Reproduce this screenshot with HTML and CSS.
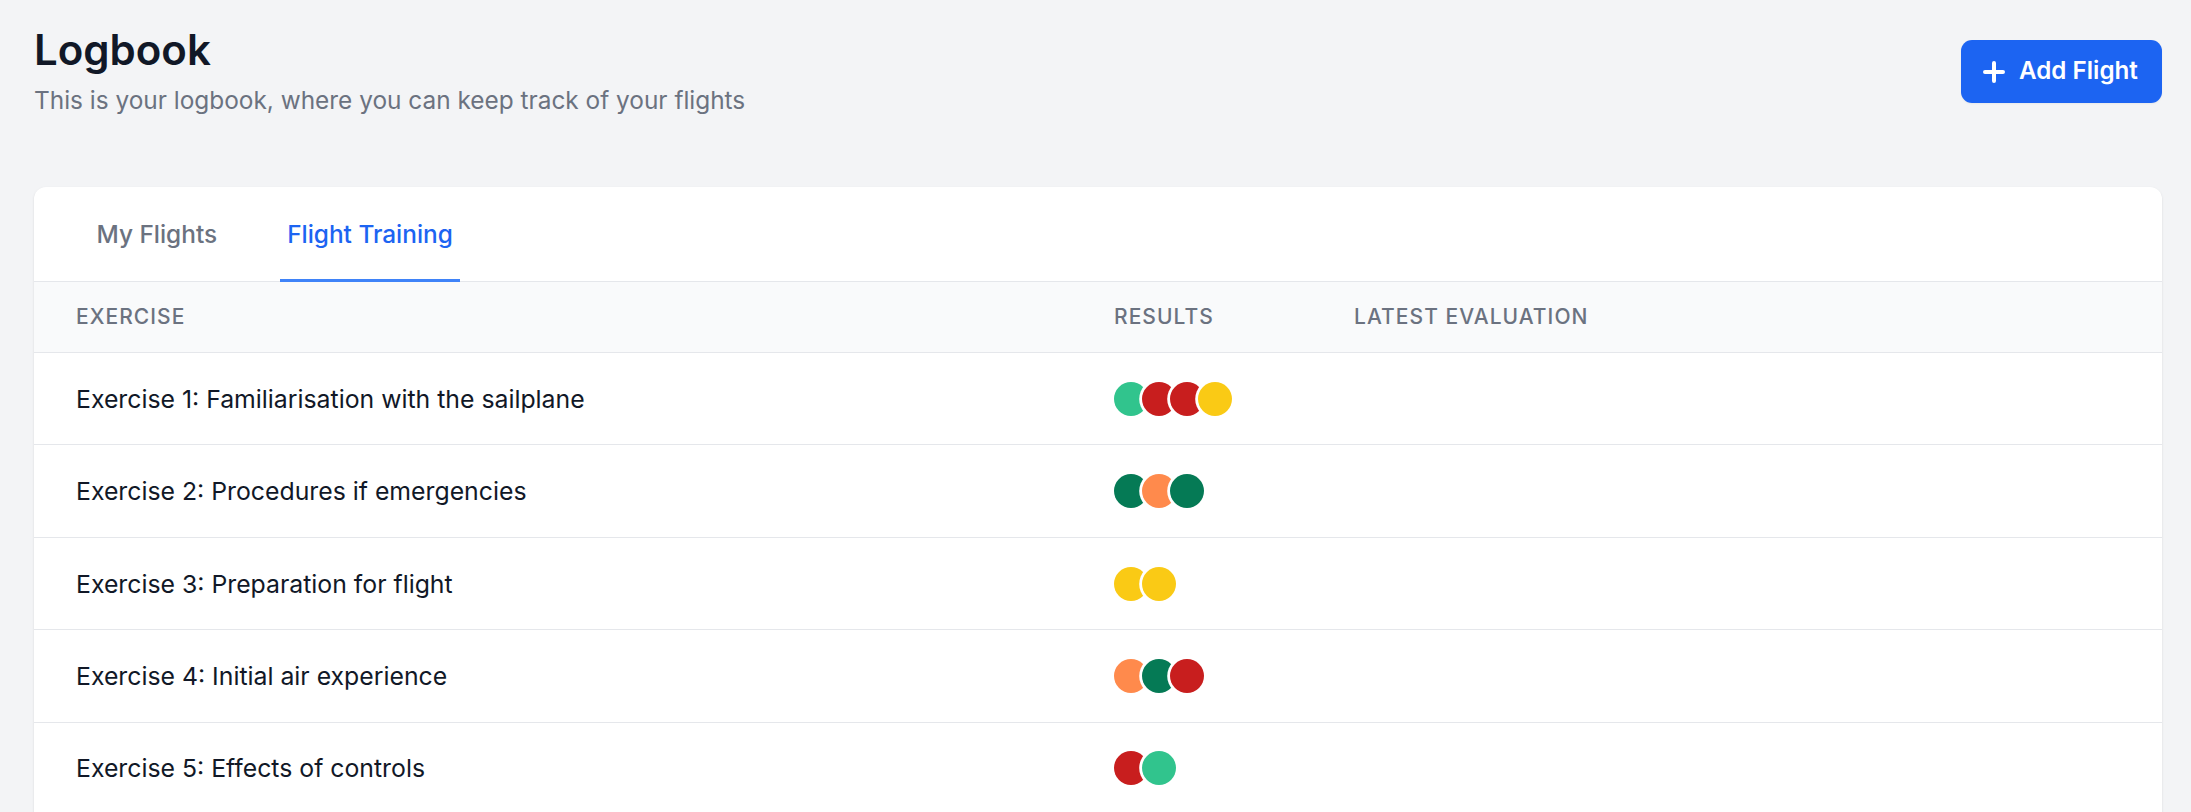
FILE: index.html
```html
<!DOCTYPE html>
<html lang="en">
<head>
<meta charset="utf-8">
<title>Logbook</title>
<link rel="stylesheet" href="styles.css">
</head>
<body>
<div class="page">
  <header class="page-header">
    <div class="heading">
      <h1 class="title">Logbook</h1>
      <p class="subtitle">This is your logbook, where you can keep track of your flights</p>
    </div>
    <button class="add-btn" type="button">
      <svg class="plus" width="22" height="22" viewBox="0 0 22 22" aria-hidden="true"><path d="M11 2v18M2 11h18" fill="none" stroke="#fff" stroke-width="4" stroke-linecap="round"/></svg>
      <span>Add Flight</span>
    </button>
  </header>

  <section class="card">
    <nav class="tabs">
      <a class="tab">My Flights</a>
      <a class="tab active">Flight Training</a>
    </nav>
    <table class="table">
      <colgroup>
        <col class="col-ex">
        <col class="col-res">
        <col class="col-eval">
      </colgroup>
      <thead>
        <tr>
          <th>Exercise</th>
          <th>Results</th>
          <th>Latest Evaluation</th>
        </tr>
      </thead>
      <tbody>
        <tr>
          <td>Exercise 1: Familiarisation with the sailplane</td>
          <td><div class="dots"><span class="dot g4"></span><span class="dot r7"></span><span class="dot r7"></span><span class="dot y3"></span></div></td>
          <td></td>
        </tr>
        <tr>
          <td>Exercise 2: Procedures if emergencies</td>
          <td><div class="dots"><span class="dot g7"></span><span class="dot o4"></span><span class="dot g7"></span></div></td>
          <td></td>
        </tr>
        <tr>
          <td>Exercise 3: Preparation for flight</td>
          <td><div class="dots"><span class="dot y3"></span><span class="dot y3"></span></div></td>
          <td></td>
        </tr>
        <tr>
          <td>Exercise 4: Initial air experience</td>
          <td><div class="dots"><span class="dot o4"></span><span class="dot g7"></span><span class="dot r7"></span></div></td>
          <td></td>
        </tr>
        <tr>
          <td>Exercise 5: Effects of controls</td>
          <td><div class="dots"><span class="dot r7"></span><span class="dot g4"></span></div></td>
          <td></td>
        </tr>
      </tbody>
    </table>
  </section>
</div>
</body>
</html>
```

FILE: styles.css
```css
* { box-sizing: border-box; }

html, body {
  margin: 0;
  padding: 0;
  background: #f3f4f6;
  font-family: Inter, "Noto Sans", "Liberation Sans", sans-serif;
  color: #111827;
}

.page {
  padding: 25px 29px 0 34px;
}

.page-header {
  display: flex;
  justify-content: space-between;
  align-items: flex-start;
}

.title {
  margin: 0;
  font-size: 42px;
  line-height: 50px;
  font-weight: 600;
  color: #111827;
}

.subtitle {
  margin: 9px 0 0;
  font-size: 24.4px;
  line-height: 32px;
  color: #6b7280;
}

.add-btn {
  margin-top: 15px;
  height: 62.7px;
  width: 201px;
  display: flex;
  align-items: center;
  gap: 14px;
  padding: 0 20px 0 22px;
  background: #1c64f2;
  color: #fff;
  border: 0;
  border-radius: 11px;
  font-family: inherit;
  font-size: 24.2px;
  line-height: 32px;
  font-weight: 600;
  white-space: nowrap;
  box-shadow: 0 1px 2px rgba(0,0,0,0.05);
}

.plus { flex: none; display: block; margin-top: 2px; }

.card {
  margin-top: 71px;
  padding-bottom: 24px;
  background: #fff;
  border-radius: 12px;
  box-shadow: 0 1px 3px rgba(0,0,0,0.08), 0 1px 2px rgba(0,0,0,0.04);
  overflow: hidden;
}

.tabs {
  display: flex;
  gap: 55px;
  padding-left: 55px;
  border-bottom: 1.4px solid #e5e7eb;
}

.tab {
  display: block;
  padding: 30.5px 7.5px 29.5px;
  margin-bottom: -1.4px;
  border-bottom: 3px solid transparent;
  font-size: 24.4px;
  line-height: 32px;
  font-weight: 500;
  color: #6b7280;
}

.tab.active {
  color: #1c64f2;
  border-bottom-color: #3f83f8;
}

.table {
  width: 100%;
  border-collapse: collapse;
  table-layout: fixed;
}

.col-ex { width: 1038px; }
.col-res { width: 240px; }

.table th {
  background: #f9fafb;
  text-align: left;
  padding: 21px 42px 21.5px;
  font-size: 21px;
  line-height: 28px;
  font-weight: 500;
  letter-spacing: 0.05em;
  text-transform: uppercase;
  color: #6b7280;
  border-bottom: 1.2px solid #e5e7eb;
  white-space: nowrap;
}

.table td {
  padding: 29.7px 42px;
  font-size: 24.8px;
  line-height: 32px;
  color: #111827;
  border-bottom: 1.2px solid #e5e7eb;
  vertical-align: middle;
}

.dots {
  display: flex;
  align-items: center;
  height: 32px;
}

.dot {
  flex: none;
  width: 34px;
  height: 34px;
  border-radius: 50%;
  box-shadow: 0 0 0 2.8px #fff;
}

.dot + .dot { margin-left: -6px; }

.g4 { background: #31c48d; }
.g7 { background: #057a55; }
.r7 { background: #c81e1e; }
.y3 { background: #faca15; }
.o4 { background: #ff8a4c; }
```
